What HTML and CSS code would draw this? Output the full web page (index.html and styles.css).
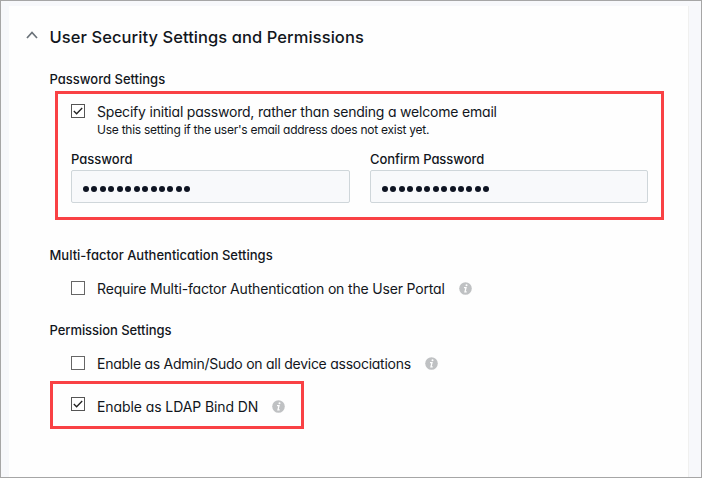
FILE: index.html
```html
<!DOCTYPE html>
<html lang="en">
<head>
<meta charset="utf-8">
<title>User Security Settings and Permissions</title>
<link rel="stylesheet" href="styles.css">
</head>
<body>
<main class="page">
  <div class="panel">
    <header class="header">
      <svg class="chevron" width="12" height="8" viewBox="0 0 12 8"><path d="M1 7 6 1.5 11 7" fill="none" stroke="#6a7279" stroke-width="1.7"/></svg>
      <h1 class="title">User Security Settings and Permissions</h1>
    </header>

    <h2 class="section-title password-title">Password Settings</h2>
    <section class="callout password-box">
      <label class="option">
        <svg class="check" width="14" height="14" viewBox="0 0 14 14"><rect x=".5" y=".5" width="13" height="13" fill="#fff" stroke="#555"/><path d="M2.8 7 5.6 9.8 11.2 4" fill="none" stroke="#222" stroke-width="1.3"/></svg>
        <span class="option-text specify">Specify initial password, rather than sending a welcome email</span>
      </label>
      <p class="hint">Use this setting if the user's email address does not exist yet.</p>
      <div class="fields">
        <div class="field">
          <div class="field-label">Password</div>
          <div class="input"><i></i><i></i><i></i><i></i><i></i><i></i><i></i><i></i><i></i><i></i><i></i><i></i><i></i></div>
        </div>
        <div class="field">
          <div class="field-label confirm">Confirm Password</div>
          <div class="input"><i></i><i></i><i></i><i></i><i></i><i></i><i></i><i></i><i></i><i></i><i></i><i></i><i></i></div>
        </div>
      </div>
    </section>

    <h2 class="section-title mfa-title">Multi-factor Authentication Settings</h2>
    <label class="option row mfa-row">
      <svg class="check" width="14" height="14" viewBox="0 0 14 14"><rect x=".5" y=".5" width="13" height="13" fill="#fff" stroke="#666"/></svg>
      <span class="option-text mfa">Require Multi-factor Authentication on the User Portal</span>
      <svg class="info" width="13" height="13" viewBox="0 0 13 13"><circle cx="6.5" cy="6.5" r="6.3" fill="#bfc1c3"/><circle cx="7.5" cy="3.3" r="1" fill="#fff"/><path d="M5 5.7h2L6 9.9h1.7" fill="none" stroke="#fff" stroke-width="1.3"/></svg>
    </label>

    <h2 class="section-title permission-title">Permission Settings</h2>
    <label class="option row admin-row">
      <svg class="check" width="14" height="14" viewBox="0 0 14 14"><rect x=".5" y=".5" width="13" height="13" fill="#fff" stroke="#666"/></svg>
      <span class="option-text admin">Enable as Admin/Sudo on all device associations</span>
      <svg class="info" width="13" height="13" viewBox="0 0 13 13"><circle cx="6.5" cy="6.5" r="6.3" fill="#bfc1c3"/><circle cx="7.5" cy="3.3" r="1" fill="#fff"/><path d="M5 5.7h2L6 9.9h1.7" fill="none" stroke="#fff" stroke-width="1.3"/></svg>
    </label>
    <section class="callout ldap-box">
      <label class="option">
        <svg class="check ldap-check" width="14" height="14" viewBox="0 0 14 14"><rect x=".5" y=".5" width="13" height="13" fill="#fff" stroke="#555"/><path d="M2.8 7 5.6 9.8 11.2 4" fill="none" stroke="#222" stroke-width="1.3"/></svg>
        <span class="option-text ldap">Enable as LDAP Bind DN</span>
        <svg class="info" width="13" height="13" viewBox="0 0 13 13"><circle cx="6.5" cy="6.5" r="6.3" fill="#bfc1c3"/><circle cx="7.5" cy="3.3" r="1" fill="#fff"/><path d="M5 5.7h2L6 9.9h1.7" fill="none" stroke="#fff" stroke-width="1.3"/></svg>
      </label>
    </section>
  </div>
</main>
</body>
</html>
```
FILE: styles.css
```css
* { box-sizing: border-box; margin: 0; padding: 0; }
body {
  width: 702px;
  height: 478px;
  overflow: hidden;
  font-family: Inter, "Open Sans", sans-serif;
  font-feature-settings: "cv11" 1;
  color: #12161c;
}
.page {
  height: 478px;
  padding: 5px 12px 0 8px;
  border: 1px solid #a6a6a6;
  background: #f7f8fb;
}
.panel {
  height: 471px;
  padding-top: 14px;
  background: #fefefe;
  border-right: 1px solid #f0f0ef;
}
.header {
  display: flex;
  align-items: center;
  height: 34px;
  padding-left: 17px;
}
.chevron { margin-bottom: 4px; }
.title {
  margin-left: 11.5px;
  font-size: 16.5px;
  font-weight: 500;
  line-height: 34px;
  letter-spacing: .07px;
  white-space: nowrap;
}
.section-title {
  height: 20px;
  margin-left: 40.5px;
  font-size: 13px;
  font-weight: 500;
  line-height: 20px;
  white-space: nowrap;
}
.password-title { margin-top: 15px; }
.callout { border: 3px solid #f94144; }
.password-box {
  width: 609px;
  height: 129px;
  margin: 2px 0 0 46px;
  padding: 8px 13px;
}
.option {
  display: flex;
  align-items: center;
  height: 20px;
}
.option-text {
  margin-left: 12px;
  font-size: 14px;
  line-height: 20px;
  white-space: nowrap;
}
.specify { letter-spacing: -.2px; }
.mfa { letter-spacing: -.17px; }
.admin { letter-spacing: -.26px; }
.ldap { letter-spacing: -.09px; }
.check { flex: none; margin-bottom: 2px; }
.info { flex: none; margin: 0 0 1px 14px; }
.hint {
  height: 16px;
  margin-left: 26px;
  font-size: 12px;
  line-height: 16px;
  letter-spacing: -.25px;
  white-space: nowrap;
}
.fields { display: flex; gap: 20px; margin-top: 11px; }
.field { width: 278px; }
.field:first-child { width: 279px; }
.field-label { height: 20px; font-size: 13px; font-weight: 500; line-height: 20px; }
.confirm { letter-spacing: -.06px; }
.input {
  display: flex;
  align-items: center;
  gap: 2.45px;
  height: 33px;
  margin-top: 1px;
  padding: 4px 0 0 11px;
  border: 1px solid #cfd6da;
  border-radius: 2px;
  background: #f8f9fb;
}
.input i { width: 6px; height: 6px; border-radius: 50%; background: #0e1422; }
.mfa-title { margin-top: 25px; }
.row { margin-left: 62px; }
.mfa-row { margin-top: 14px; }
.permission-title { margin-top: 21px; letter-spacing: -.06px; }
.admin-row { margin-top: 14px; }
.ldap-box { width: 254px; height: 48px; margin: 7px 0 0 41px; padding: 13px 18px; }
.ldap-check { margin-bottom: 6px; }
```
